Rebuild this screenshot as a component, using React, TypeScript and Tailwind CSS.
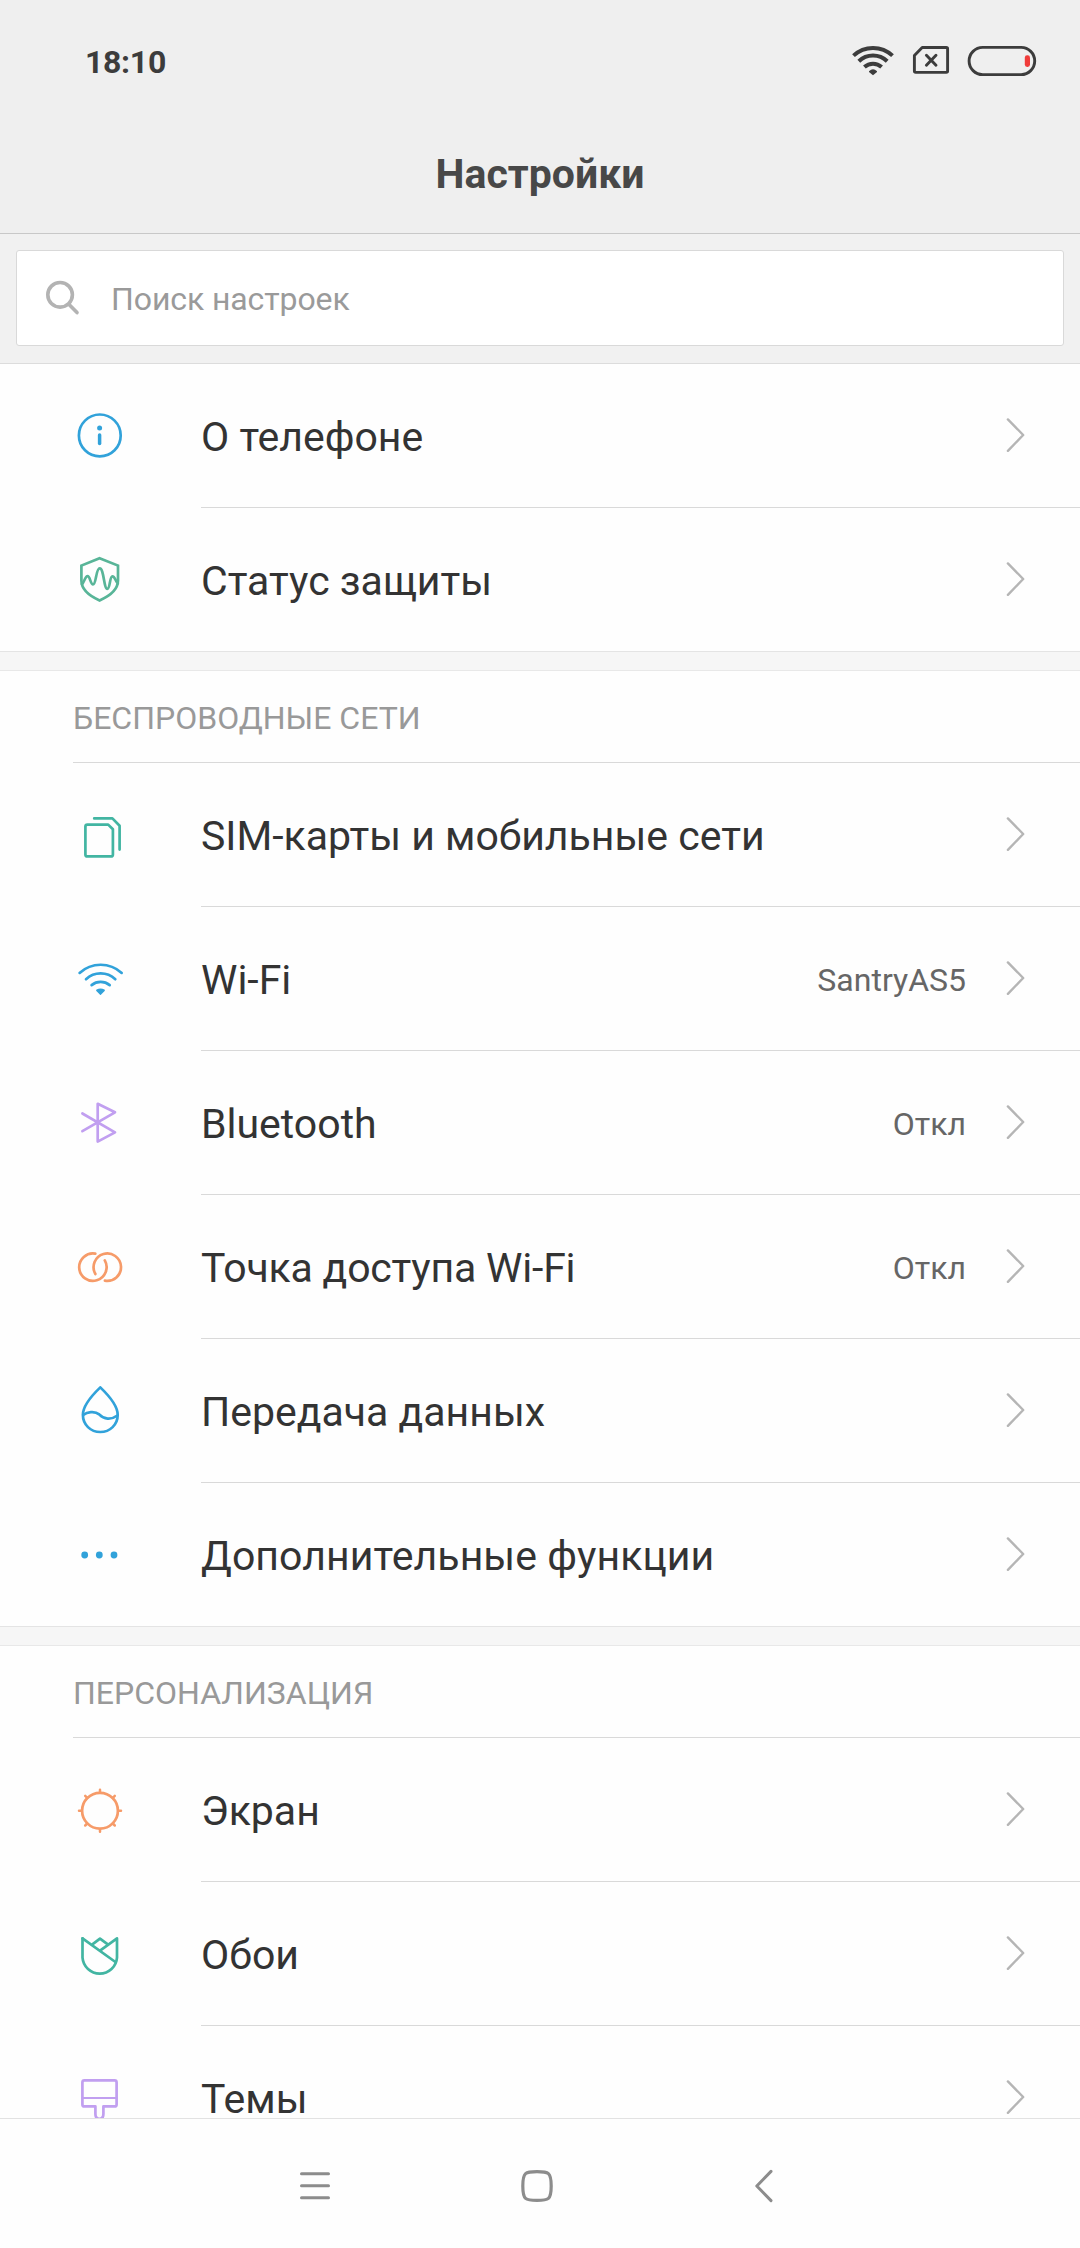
import type { ReactNode } from "react";

interface SettingItem {
  id: string;
  title: string;
  titleClass?: string;
  value?: string;
  icon: ReactNode;
}

interface SettingSection {
  id: string;
  heading?: string;
  items: SettingItem[];
}

const BLUE = "#31a2da";
const GREEN = "#58b598";
const TEAL = "#42b5a2";
const PURPLE = "#c19ff0";
const ORANGE = "#f69b69";

// ─── Icons ────────────────────────────────────────────────────────

function RowIcon({ color, children }: { color: string; children: ReactNode }) {
  return (
    <svg
      className="w-12 h-[49px] shrink-0"
      viewBox="0 0 48 49"
      fill="none"
      stroke={color}
      strokeWidth={2.7}
      strokeLinecap="round"
      strokeLinejoin="round"
    >
      {children}
    </svg>
  );
}

const infoIcon = (
  <RowIcon color={BLUE}>
    <circle cx="23.8" cy="24.4" r="20.9" />
    <circle cx="23.6" cy="17" r="2.5" fill={BLUE} stroke="none" />
    <path d="M23.6 24V32.6" strokeWidth={3.5} />
  </RowIcon>
);

const shieldIcon = (
  <RowIcon color={GREEN}>
    <path
      d="M23.6 3.3L42 10.6V25.5C42 34 34.5 40.6 23.6 45.4C12.7 40.6 5.4 34 5.4 25.5V10.6Z"
      strokeLinejoin="miter"
    />
    <path d="M6 29.2C8 28 9 21.2 11.6 21.2C14 21.2 14.6 29.5 17 29.5C20.3 29.5 19.8 13.4 23.7 13.4C28 13.4 27.8 33.9 31.3 33.9C34.2 33.9 33.6 21.3 36.4 21.3C39 21.3 39.6 26.5 41.8 28.2" />
  </RowIcon>
);

const simIcon = (
  <RowIcon color={TEAL}>
    <path d="M11.4 14.6H32.2L36.9 19.3V44.4Q36.9 46.4 34.9 46.4H11.4Q9.4 46.4 9.4 44.4V16.6Q9.4 14.6 11.4 14.6Z" />
    <path d="M18.2 8.4H36.4L43.6 15.8V39.6" />
  </RowIcon>
);

const wifiIcon = (
  <RowIcon color={BLUE}>
    <path d="M3.6 18.9A31.2 31.2 0 0 1 45.7 18.9" />
    <path d="M10 25.2A21.5 21.5 0 0 1 39.3 25.2" />
    <path d="M15.6 31.1A14.4 14.4 0 0 1 33.7 31.1" />
    <path d="M21 36.3Q24.5 34.3 28 36.3L24.5 40Z" fill={BLUE} strokeWidth={1.8} />
  </RowIcon>
);

const bluetoothIcon = (
  <RowIcon color={PURPLE}>
    <path d="M6.4 33.2L39 14.3L21.7 5.8V43.6L39 34.4L6.4 15.5" />
  </RowIcon>
);

const hotspotIcon = (
  <RowIcon color={ORANGE}>
    <path d="M19.3 11.7A13.7 13.7 0 1 0 28.8 18.4" />
    <path d="M28.9 38.7A13.7 13.7 0 1 0 19.4 32" />
  </RowIcon>
);

const dropIcon = (
  <RowIcon color={BLUE}>
    <path d="M24.3 1.4C19.5 6 6.9 18.5 6.9 28.8C6.9 38.7 14.6 46 24.3 46S41.7 38.7 41.7 28.8C41.7 18.5 29.1 6 24.3 1.4Z" />
    <path d="M7.3 28.8C11 26.2 18.5 24.6 23.2 28.4C28 33.5 35 34.2 41.4 29.5" />
  </RowIcon>
);

const dotsIcon = (
  <RowIcon color={BLUE}>
    <g fill={BLUE} stroke="none">
      <circle cx="8.7" cy="25" r="3.4" />
      <circle cx="23.3" cy="25" r="3.4" />
      <circle cx="38" cy="25" r="3.4" />
    </g>
  </RowIcon>
);

const screenIcon = (
  <RowIcon color={ORANGE}>
    <circle cx="24" cy="25.7" r="17.9" />
    <path
      d="M24 4.7V7M24 44.4V46.7M3 25.7H5.4M42.6 25.7H45M9.2 10.9L11.2 12.9M36.8 38.5L38.8 40.5M9.2 40.5L11.2 38.5M36.8 12.9L38.8 10.9"
      strokeWidth={2.5}
    />
  </RowIcon>
);

const wallpaperIcon = (
  <RowIcon color={TEAL}>
    <path d="M6.5 9.4L39.4 33" />
    <path d="M6.5 9.4V28.6A17.3 17.3 0 0 0 41 28.6V9.4L24.4 21.3" />
    <path d="M16.4 15.4L24 9.6L31.8 15.4" />
  </RowIcon>
);

const themesIcon = (
  <RowIcon color={PURPLE}>
    <path d="M19.4 41V33.4H8.4Q6.4 33.4 6.4 31.4V9.4Q6.4 7.4 8.4 7.4H38.6Q40.6 7.4 40.6 9.4V31.4Q40.6 33.4 38.6 33.4H27.4V41Q27.4 45.8 23.4 45.8T19.4 41Z" />
    <path d="M6.4 25H40.6" strokeWidth={2} />
  </RowIcon>
);

function Chevron() {
  return (
    <svg
      className="w-5 h-[37px] shrink-0"
      viewBox="0 0 20 37"
      fill="none"
      stroke="#b5b5b5"
      strokeWidth={2.4}
      strokeLinecap="round"
      strokeLinejoin="round"
    >
      <path d="M1.9 2.4L17.2 18L1.9 33.8" />
    </svg>
  );
}

// ─── Data ─────────────────────────────────────────────────────────

const sections: SettingSection[] = [
  {
    id: "device",
    items: [
      { id: "about", title: "О телефоне", icon: infoIcon },
      { id: "security", title: "Статус защиты", icon: shieldIcon },
    ],
  },
  {
    id: "network",
    heading: "БЕСПРОВОДНЫЕ СЕТИ",
    items: [
      { id: "sim", title: "SIM-карты и мобильные сети", icon: simIcon },
      { id: "wifi", title: "Wi-Fi", value: "SantryAS5", icon: wifiIcon },
      { id: "bluetooth", title: "Bluetooth", value: "Откл", icon: bluetoothIcon },
      {
        id: "hotspot",
        title: "Точка доступа Wi-Fi",
        titleClass: "tracking-[-0.2px]",
        value: "Откл",
        icon: hotspotIcon,
      },
      { id: "data", title: "Передача данных", icon: dropIcon },
      {
        id: "more",
        title: "Дополнительные функции",
        titleClass: "tracking-[0.08px]",
        icon: dotsIcon,
      },
    ],
  },
  {
    id: "personal",
    heading: "ПЕРСОНАЛИЗАЦИЯ",
    items: [
      { id: "display", title: "Экран", icon: screenIcon },
      { id: "wallpaper", title: "Обои", icon: wallpaperIcon },
      { id: "themes", title: "Темы", icon: themesIcon },
    ],
  },
];

// ─── Parts ────────────────────────────────────────────────────────

function StatusBar() {
  return (
    <div className="flex items-center justify-between h-[38px] pl-[85px] pr-[43px]">
      <span className="text-[32px] leading-[38px] font-bold tracking-[-0.3px] text-[#3c3c3c]">18:10</span>
      <div className="flex gap-[17px]">
        <svg className="w-11 h-[38px]" viewBox="0 0 44 38" fill="none" stroke="#3c3c3c" strokeWidth={4}>
          <path d="M2.5 12.6A28.5 28.5 0 0 1 41.5 12.6" />
          <path d="M7.8 18.3A20.5 20.5 0 0 1 36.2 18.3" />
          <path d="M13.4 24.1A12.8 12.8 0 0 1 30.6 24.1" />
          <path d="M18 28.2Q22 24.4 26 28.2V29L22 32.2L18 29Z" fill="#3c3c3c" stroke="none" />
        </svg>
        <svg
          className="w-[38px] h-[38px]"
          viewBox="0 0 38 38"
          fill="none"
          stroke="#3c3c3c"
          strokeWidth={2.9}
          strokeLinejoin="round"
        >
          <path d="M10.2 4.5H34.3Q35.6 4.5 35.6 5.8V28.1Q35.6 29.4 34.3 29.4H3.7Q2.4 29.4 2.4 28.1V12.5Z" />
          <path d="M14.4 12.2L24 22.2M24 12.2L14.4 22.2" strokeLinecap="round" />
        </svg>
        <svg className="w-[70px] h-[38px]" viewBox="0 0 70 38" fill="none">
          <rect x="2.1" y="4.4" width="65.6" height="27.2" rx="13.6" stroke="#3c3c3c" strokeWidth={2.9} />
          <rect x="57.8" y="12.3" width="5.2" height="11.6" rx="2.4" fill="#f03c3a" />
        </svg>
      </div>
    </div>
  );
}

function SearchBox() {
  return (
    <div className="bg-[#f1f1f1] border-b border-[#dcdcdc] px-4 pt-4 pb-[17px]">
      <div className="flex items-center h-24 bg-white border border-[#d9d9d9] rounded-[3px] pl-[27px]">
        <svg
          className="w-9 h-9"
          viewBox="0 0 36 36"
          fill="none"
          stroke="#b3b3b3"
          strokeWidth={3.6}
          strokeLinecap="round"
        >
          <circle cx="16.1" cy="14.8" r="12.3" />
          <path d="M24.8 24.2L33 32.6" />
        </svg>
        <span className="ml-[31px] pt-0.5 text-[32px] leading-[38px] tracking-[-0.1px] text-[#9a9a9a]">
          Поиск настроек
        </span>
      </div>
    </div>
  );
}

function SettingRow({ item, last }: { item: SettingItem; last: boolean }) {
  return (
    <li className={`flex h-36 pl-[76px] ${last ? "border-b border-[#e4e4e4]" : ""}`}>
      <div className="flex items-center h-[143px] w-[125px] shrink-0">{item.icon}</div>
      <div className={`flex flex-1 items-center pr-[54px] ${last ? "" : "border-b border-[#d9d9d9]"}`}>
        <span className={`pt-[3px] text-[41px] leading-[48px] text-[#333333] ${item.titleClass ?? ""}`}>
          {item.title}
        </span>
        <span className="ml-auto mr-10 pt-[3px] text-[32px] leading-[38px] text-[#666666]">{item.value}</span>
        <Chevron />
      </div>
    </li>
  );
}

function NavBar() {
  return (
    <nav className="flex items-center h-[130px] shrink-0 pt-[5px] pl-[300px] bg-[#fefefe] border-t border-[#e2e2e2]">
      <svg className="w-[30px] h-9" viewBox="0 0 30 36" stroke="#8c8c8c" strokeWidth={3} strokeLinecap="round">
        <path d="M1.5 5.8H28.5M1.5 17.8H28.5M1.5 29.8H28.5" />
      </svg>
      <svg className="w-8 h-9 ml-[191px]" viewBox="0 0 32 36" fill="none" stroke="#8c8c8c" strokeWidth={3.2}>
        <path d="M16 3.6C27.5 3.6 30.2 4.2 30.2 18S27.5 32.4 16 32.4S1.8 31.8 1.8 18S4.5 3.6 16 3.6Z" />
      </svg>
      <svg
        className="w-[18px] h-9 ml-[202px]"
        viewBox="0 0 18 36"
        fill="none"
        stroke="#8c8c8c"
        strokeWidth={3}
        strokeLinecap="round"
        strokeLinejoin="round"
      >
        <path d="M16 3.4L1.8 18L16 32.6" />
      </svg>
    </nav>
  );
}

export default function App() {
  return (
    <div className="flex flex-col w-[1080px] h-[2248px] overflow-hidden bg-[#fefefe] font-[Roboto,sans-serif]">
      <header className="h-[234px] shrink-0 pt-[43px] bg-[#efefef] border-b border-[#c8c8c8]">
        <StatusBar />
        <h1 className="mt-[69px] text-center text-[41px] leading-[48px] font-bold text-[#484848]">Настройки</h1>
      </header>

      <main className="flex-1 min-h-0 overflow-hidden">
        <SearchBox />
        {sections.map((section) => (
          <section key={section.id}>
            {section.heading && (
              <>
                <div className="h-[19px] bg-[#f6f6f6] border-b border-[#e8e8e8]" />
                <div className="pl-[73px]">
                  <h2 className="flex items-center h-[92px] pt-[3px] border-b border-[#d9d9d9] text-[32px] leading-[38px] text-[#999999]">
                    {section.heading}
                  </h2>
                </div>
              </>
            )}
            <ul>
              {section.items.map((item, i) => (
                <SettingRow key={item.id} item={item} last={i === section.items.length - 1} />
              ))}
            </ul>
          </section>
        ))}
      </main>

      <NavBar />
    </div>
  );
}
